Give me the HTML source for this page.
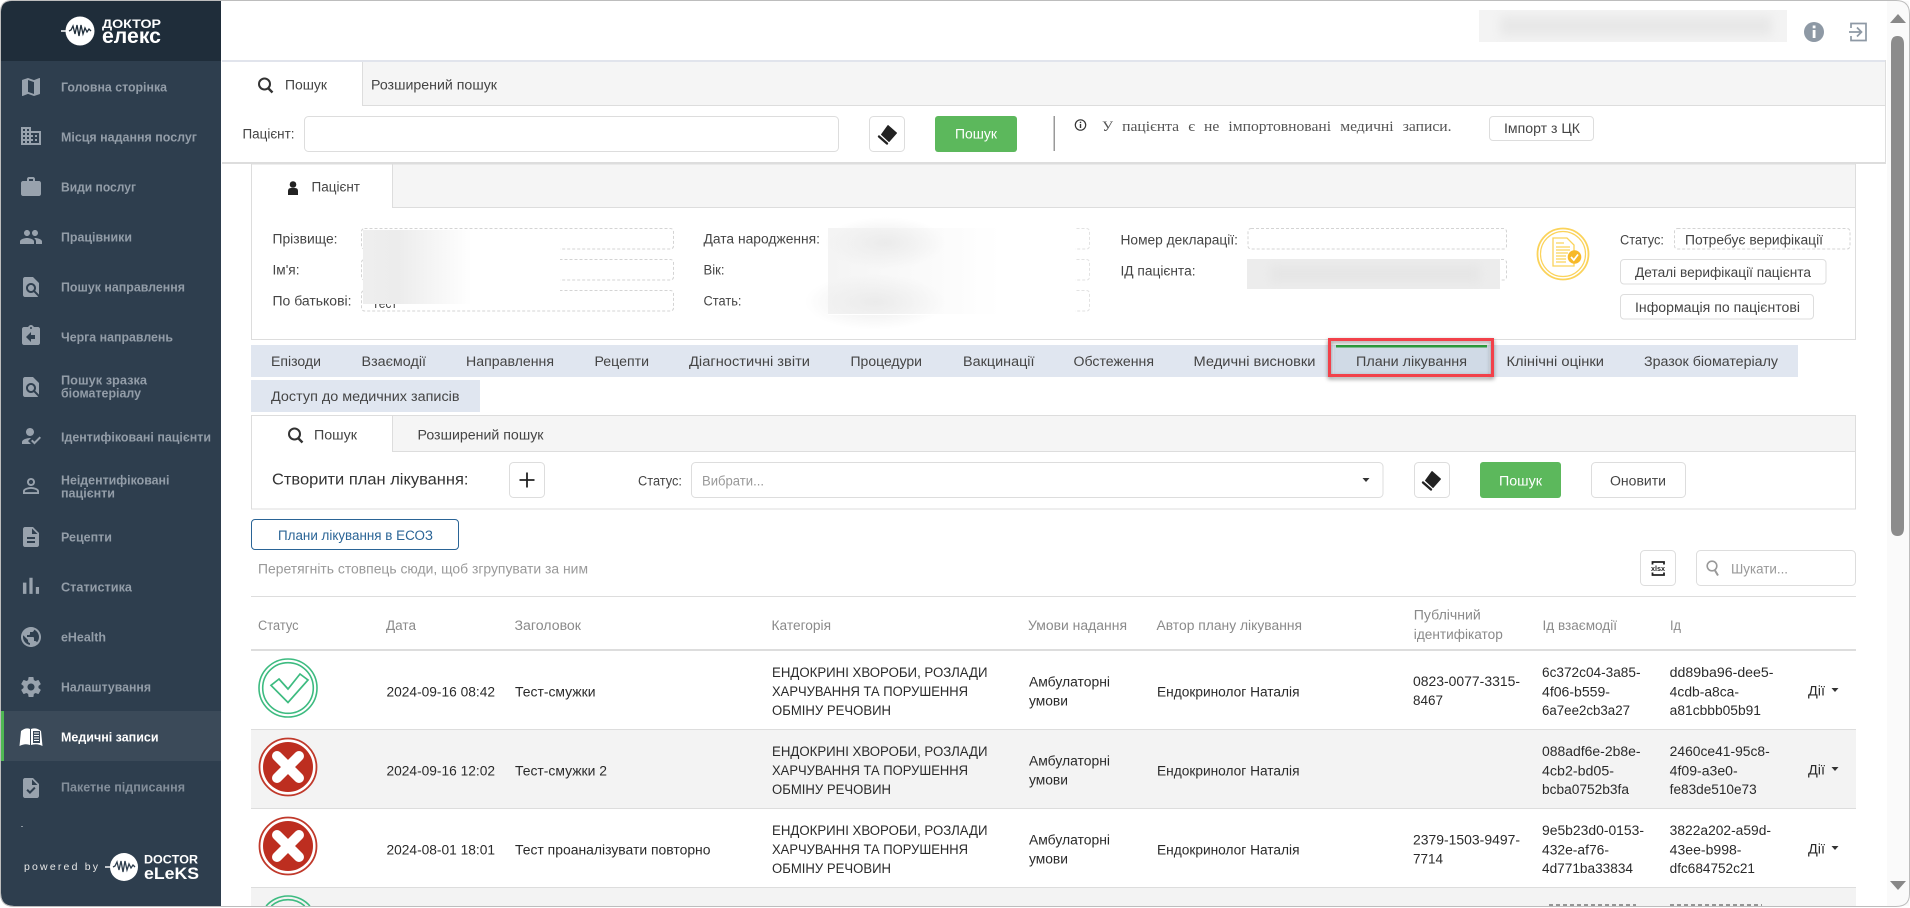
<!DOCTYPE html>
<html lang="uk"><head><meta charset="utf-8"><title>Плани лікування</title>
<style>
html,body{margin:0;padding:0;background:#fff;overflow:hidden;width:1910px;height:908px}
svg{display:block}
text{font-family:"Liberation Sans",sans-serif;font-size:13.5px;fill:#444}
.s text{font-weight:700;font-size:12.5px;fill:#939da8}
.ic path{fill:#98a2ad}
.h text{fill:#8a8a8a}
.d text{fill:#2a2a2a}
.box{fill:#fff;stroke:#ddd;stroke-width:1}
.dash{fill:#fff;stroke:#d4d4d4;stroke-width:1;stroke-dasharray:3 2}
</style></head><body>
<svg xmlns="http://www.w3.org/2000/svg" width="1910" height="908" viewBox="0 0 1910 908">
<defs>
<linearGradient id="g1" x1="0" x2="1" y1="0" y2="0"><stop offset="0" stop-color="#eee"/><stop offset=".18" stop-color="#ececec"/><stop offset=".55" stop-color="#fff"/></linearGradient>
<linearGradient id="g2" x1="0" x2="1" y1="0" y2="0"><stop offset="0" stop-color="#f4f4f4"/><stop offset=".25" stop-color="#f8f8f8"/><stop offset=".7" stop-color="#fff"/></linearGradient>
<radialGradient id="g3"><stop offset="0" stop-color="#ebebeb"/><stop offset="1" stop-color="#ebebeb" stop-opacity="0"/></radialGradient>
<filter id="b" x="-10%" y="-40%" width="120%" height="180%"><feGaussianBlur stdDeviation="5"/></filter>
<clipPath id="c1"><rect x="1479" y="10" width="308" height="32"/></clipPath>
<clipPath id="c2"><rect x="1247" y="259" width="253" height="30"/></clipPath>
<g id="eraser"><path d="M0-8.500 8.500-1 1 7.500-6.500.5Z" fill="#222" stroke="#222" stroke-linejoin="round"/><path d="M-9 2.500-1 9.500" stroke="#222" stroke-width="2.400" stroke-linecap="round"/></g>
<g id="okI"><circle r="29" fill="none" stroke="#3dbb80" stroke-width="1.600"/><circle r="25.300" fill="none" stroke="#3dbb80" stroke-width="1.600"/><path d="M-9-9 0 1 12-14 20-8 0 14.500-17-2.700z" fill="none" stroke="#3dbb80" stroke-width="1.700"/></g>
<g id="noI"><circle r="28.500" fill="#fff" stroke="#c0392b" stroke-width="1.800"/><circle r="25" fill="#bd2e20"/><path d="M-11-11 11 11M11-11-11 11" stroke="#fff" stroke-width="10" stroke-linecap="round"/></g>
</defs>

<rect width="1910" height="908" fill="#fff"/>

<!-- sidebar -->
<path d="M1 12Q1 1 12 1H221V906H14Q1 906 1 893Z" fill="#2e3e4e"/>
<path d="M1 12Q1 1 12 1H221V61H1Z" fill="#1f2d3a"/>
<rect x="1" y="711" width="220" height="50" fill="#3b4a59"/>
<rect x="1" y="711" width="3" height="50" fill="#4fb853"/>

<!-- logo -->
<circle cx="80" cy="31" r="14.500" fill="#fff"/>
<path d="M61 31H69" stroke="#fff" stroke-width="1.500" fill="none"/>
<path d="M69 31l2-1 2-4 2 8 2-9 2 11 2-11 2 9 2-6 2 4 2-3 2 2" stroke="#1f2d3a" stroke-width="1.300" fill="none"/>
<text x="102" y="28" textLength="59" lengthAdjust="spacingAndGlyphs" style="font-size:11.500px;font-weight:700;fill:#fff">ДОКТОР</text>
<text x="102" y="43" textLength="59" lengthAdjust="spacingAndGlyphs" style="font-size:21px;font-weight:700;fill:#fff">елекс</text>

<!-- sidebar icons -->
<g class="ic">
<path transform="translate(19 75)" d="M20.500 3l-.16.03L15 5.100 9 3 3.360 4.900c-.21.07-.36.25-.36.48V20.500c0 .28.22.5.5.5l.16-.03L9 18.900l6 2.100 5.640-1.900c.21-.07.36-.25.36-.48V3.500c0-.28-.22-.5-.5-.5zM15 19l-6-2.110V5l6 2.110V19z"/>
<path transform="translate(19 124)" d="M12 7V3H2v18h20V7H12zM6 19H4v-2h2v2zm0-4H4v-2h2v2zm0-4H4V9h2v2zm0-4H4V5h2v2zm4 12H8v-2h2v2zm0-4H8v-2h2v2zm0-4H8V9h2v2zm0-4H8V5h2v2zm10 12h-8v-2h2v-2h-2v-2h2v-2h-2V9h8v10zm-2-8h-2v2h2v-2zm0 4h-2v2h2v-2z"/>
<path transform="translate(19 175)" d="M20 6h-4V4c0-1.110-.89-2-2-2h-4c-1.110 0-2 .89-2 2v2H4c-1.110 0-1.990.89-1.990 2L2 19c0 1.110.89 2 2 2h16c1.110 0 2-.89 2-2V8c0-1.110-.89-2-2-2zm-6 0h-4V4h4v2z"/>
<path transform="translate(19 225)" d="M16 11c1.660 0 2.990-1.340 2.990-3S17.660 5 16 5c-1.660 0-3 1.340-3 3s1.340 3 3 3zm-8 0c1.660 0 2.990-1.340 2.990-3S9.660 5 8 5C6.340 5 5 6.340 5 8s1.340 3 3 3zm0 2c-2.330 0-7 1.170-7 3.500V19h14v-2.500c0-2.330-4.670-3.500-7-3.500zm8 0c-.29 0-.62.02-.97.05 1.160.84 1.970 1.970 1.970 3.450V19h6v-2.500c0-2.330-4.670-3.500-7-3.500z"/>
<path transform="translate(19 275)" d="M20 19.590V8l-6-6H6c-1.100 0-1.990.9-1.990 2L4 20c0 1.100.89 2 1.990 2H18c.45 0 .85-.15 1.190-.4l-4.430-4.430c-.8.52-1.740.83-2.760.83-2.760 0-5-2.240-5-5s2.240-5 5-5 5 2.240 5 5c0 1.020-.31 1.960-.83 2.750L20 19.590zM9 13c0 1.660 1.340 3 3 3s3-1.340 3-3-1.340-3-3-3-3 1.340-3 3z"/>
<path transform="translate(19 324)" d="M19 3h-4.180C14.400 1.840 13.300 1 12 1c-1.300 0-2.400.84-2.820 2H5c-1.100 0-2 .9-2 2v14c0 1.100.9 2 2 2h14c1.100 0 2-.9 2-2V5c0-1.100-.9-2-2-2zm-7 0c.55 0 1 .45 1 1s-.45 1-1 1-1-.45-1-1 .45-1 1-1zm4 12h-4v3l-5-5 5-5v3h4v4z"/>
<path transform="translate(19 375)" d="M20 19.590V8l-6-6H6c-1.100 0-1.990.9-1.990 2L4 20c0 1.100.89 2 1.990 2H18c.45 0 .85-.15 1.190-.4l-4.430-4.430c-.8.52-1.740.83-2.760.83-2.760 0-5-2.240-5-5s2.240-5 5-5 5 2.240 5 5c0 1.020-.31 1.960-.83 2.750L20 19.590zM9 13c0 1.660 1.340 3 3 3s3-1.340 3-3-1.340-3-3-3-3 1.340-3 3z"/>
<path transform="translate(19 424)" d="M9 17l3-2.940c-.39-.04-.68-.06-1-.06-2.670 0-8 1.340-8 4v2h9l-3-3zm2-5c2.210 0 4-1.790 4-4s-1.790-4-4-4-4 1.790-4 4 1.790 4 4 4zM15.470 20.500L12 17l1.400-1.410 2.070 2.080 5.130-5.170 1.400 1.410z"/>
<path transform="translate(19 474)" d="M12 5.900c1.160 0 2.100.94 2.100 2.100s-.94 2.100-2.100 2.100S9.900 9.160 9.900 8s.94-2.100 2.100-2.100m0 9c2.970 0 6.100 1.460 6.100 2.100v1.100H5.900V17c0-.64 3.130-2.100 6.100-2.100M12 4C9.790 4 8 5.790 8 8s1.790 4 4 4 4-1.790 4-4-1.790-4-4-4zm0 9c-2.670 0-8 1.340-8 4v3h16v-3c0-2.660-5.330-4-8-4z"/>
<path transform="translate(19 525)" d="M14 2H6c-1.100 0-1.990.9-1.990 2L4 20c0 1.100.89 2 1.990 2H18c1.100 0 2-.9 2-2V8l-6-6zm2 16H8v-2h8v2zm0-4H8v-2h8v2zm-3-5V3.500L18.500 9H13z"/>
<path transform="translate(17.200 572) scale(1.150)" d="M5 9.200h3V19H5zM10.600 5h2.800v14h-2.800zm5.600 8H19v6h-2.800z"/>
<path transform="translate(19 625)" d="M12 2C6.480 2 2 6.480 2 12s4.480 10 10 10 10-4.480 10-10S17.520 2 12 2zm-1 17.930c-3.950-.49-7-3.850-7-7.930 0-.62.08-1.210.21-1.790L9 15v1c0 1.100.9 2 2 2v1.930zm6.900-2.540c-.26-.81-1-1.390-1.900-1.390h-1v-3c0-.55-.45-1-1-1H8v-2h2c.55 0 1-.45 1-1V7h2c1.100 0 2-.9 2-2v-.41c2.930 1.190 5 4.060 5 7.410 0 2.080-.8 3.970-2.100 5.390z"/>
<path transform="translate(19 675)" d="M19.430 12.980c.04-.32.07-.64.07-.98s-.03-.66-.07-.98l2.110-1.650c.19-.15.24-.42.12-.64l-2-3.460c-.12-.22-.39-.3-.61-.22l-2.490 1c-.52-.4-1.080-.73-1.690-.98l-.38-2.650C14.460 2.180 14.250 2 14 2h-4c-.25 0-.46.18-.49.42l-.38 2.650c-.61.25-1.170.59-1.690.98l-2.490-1c-.23-.09-.49 0-.61.22l-2 3.460c-.13.22-.07.49.12.64l2.110 1.650c-.04.32-.07.65-.07.98s.03.66.07.98l-2.110 1.650c-.19.15-.24.42-.12.64l2 3.460c.12.22.39.3.61.22l2.490-1c.52.4 1.080.73 1.690.98l.38 2.650c.03.24.24.42.49.42h4c.25 0 .46-.18.49-.42l.38-2.650c.61-.25 1.170-.59 1.690-.98l2.490 1c.23.09.49 0 .61-.22l2-3.460c.12-.22.07-.49-.12-.64l-2.110-1.650zM12 15.500c-1.930 0-3.500-1.570-3.500-3.500s1.570-3.500 3.500-3.500 3.500 1.570 3.500 3.500-1.570 3.500-3.500 3.500z"/>
<path transform="translate(19 776)" d="M14 2H6c-1.100 0-1.990.9-1.990 2L4 20c0 1.100.89 2 1.990 2H18c1.100 0 2-.9 2-2V8l-6-6zm-3.060 16L7.400 14.460l1.410-1.410 2.120 2.120 4.240-4.240 1.410 1.410L10.940 18zM13 9V3.500L18.500 9H13z"/>
</g>
<!-- book -->
<path d="M19.500 746 21 731Q26 727 30 729V745Q25 743 19.500 746Z" fill="#fff"/>
<path d="M31 729Q36 727 41 731L42.500 746Q37 743 31 745Z" fill="#fff"/>
<rect x="33" y="731" width="7" height="12" fill="#3b4a59"/>
<path d="M34 733H39M34 735.500H39M34 738H39M34 740.500H39" stroke="#fff" stroke-width="1"/>

<!-- sidebar text -->
<g class="s">
<text x="61" y="91.500" textLength="106" lengthAdjust="spacingAndGlyphs">Головна сторінка</text>
<text x="61" y="141.500" textLength="136" lengthAdjust="spacingAndGlyphs">Місця надання послуг</text>
<text x="61" y="191.500" textLength="75" lengthAdjust="spacingAndGlyphs">Види послуг</text>
<text x="61" y="241.500" textLength="71" lengthAdjust="spacingAndGlyphs">Працівники</text>
<text x="61" y="291.500" textLength="124" lengthAdjust="spacingAndGlyphs">Пошук направлення</text>
<text x="61" y="341.500" textLength="112" lengthAdjust="spacingAndGlyphs">Черга направлень</text>
<text x="61" y="384.500" textLength="86" lengthAdjust="spacingAndGlyphs">Пошук зразка</text>
<text x="61" y="397.500" textLength="80" lengthAdjust="spacingAndGlyphs">біоматеріалу</text>
<text x="61" y="441.500" textLength="150" lengthAdjust="spacingAndGlyphs">Ідентифіковані пацієнти</text>
<text x="61" y="484.500" textLength="108.500" lengthAdjust="spacingAndGlyphs">Неідентифіковані</text>
<text x="61" y="497.500" textLength="54" lengthAdjust="spacingAndGlyphs">пацієнти</text>
<text x="61" y="541.500" textLength="51" lengthAdjust="spacingAndGlyphs">Рецепти</text>
<text x="61" y="591.500" textLength="71" lengthAdjust="spacingAndGlyphs">Статистика</text>
<text x="61" y="641.500" textLength="45" lengthAdjust="spacingAndGlyphs">eHealth</text>
<text x="61" y="691.500" textLength="90" lengthAdjust="spacingAndGlyphs">Налаштування</text>
<text x="61" y="741.500" textLength="97.500" lengthAdjust="spacingAndGlyphs" style="fill:#fff">Медичні записи</text>
<text x="61" y="791.500" textLength="124" lengthAdjust="spacingAndGlyphs" style="fill:#838e9a">Пакетне підписання</text>
</g>
<rect x="21" y="826" width="2" height="1" fill="#8b96a1"/>

<!-- powered by -->
<text x="24" y="870" textLength="74" style="font-size:10.500px;fill:#e8e8e8">powered by</text>
<circle cx="124" cy="867" r="14" fill="#fff"/>
<path d="M105 867H113" stroke="#fff" stroke-width="1.400" fill="none"/>
<path d="M113 867l2-1 2-4 2 8 2-9 2 11 2-11 2 9 2-6 2 4 2-3 2 2" stroke="#2e3e4e" stroke-width="1.300" fill="none"/>
<text x="144" y="863.500" textLength="54" lengthAdjust="spacingAndGlyphs" style="font-size:11.500px;font-weight:700;fill:#fff">DOCTOR</text>
<text x="144" y="879" textLength="55" lengthAdjust="spacingAndGlyphs" style="font-size:17px;font-weight:700;fill:#fff">eLeKS</text>

<!-- top bar -->
<g clip-path="url(#c1)"><rect x="1479" y="10" width="308" height="32" fill="#f3f3f3"/><rect x="1500" y="16" width="272" height="20" fill="#e8e8e8" filter="url(#b)"/></g>
<circle cx="1814" cy="32" r="10" fill="#8e99a5"/>
<rect x="1812.700" y="30" width="2.800" height="8" fill="#fff"/><rect x="1812.700" y="25.500" width="2.800" height="2.800" fill="#fff"/>
<path d="M1851 28V23.500H1866V40.500H1851V36M1849 32H1861M1857 27.500L1861.500 32 1857 36.500" fill="none" stroke="#8e99a5" stroke-width="1.700"/>

<!-- top panel -->
<rect x="222" y="60" width="1663" height="2" fill="#e1e4ec"/>
<rect x="363" y="62" width="1522" height="43" fill="#f5f5f5"/>
<path d="M362.500 62V105.500H1885" fill="none" stroke="#ddd"/>
<path d="M1885.500 60V163" stroke="#ddd"/>
<rect x="222" y="162" width="1664" height="2" fill="#ddd"/>
<g fill="none" stroke="#333" stroke-width="2"><circle cx="264.500" cy="84" r="5.500"/><path d="M268.500 88.500 272.500 92.500" stroke-width="2.400"/></g>
<text x="285" y="89.500" textLength="42" lengthAdjust="spacingAndGlyphs">Пошук</text>
<text x="371" y="89.500" textLength="126" lengthAdjust="spacingAndGlyphs">Розширений пошук</text>
<text x="242.500" y="138.500" textLength="52" lengthAdjust="spacingAndGlyphs">Пацієнт:</text>
<rect class="box" x="304.500" y="116.500" width="534" height="35" rx="4"/>
<rect class="box" x="869.500" y="116.500" width="35" height="35" rx="4"/>
<use href="#eraser" transform="translate(888 134)"/>
<rect x="935" y="116" width="82" height="36" rx="3" fill="#5cb85c"/>
<text x="955" y="138.500" textLength="42" lengthAdjust="spacingAndGlyphs" style="fill:#fff">Пошук</text>
<rect x="1053.500" y="116" width="1.500" height="35" fill="#999"/>
<circle cx="1080.500" cy="125" r="5.200" fill="none" stroke="#333" stroke-width="1.200"/>
<rect x="1079.800" y="124" width="1.400" height="4" fill="#333"/><rect x="1079.800" y="121.700" width="1.400" height="1.400" fill="#333"/>
<text x="1102" y="131" textLength="349.500" lengthAdjust="spacingAndGlyphs" style="font-family:'Liberation Serif',serif;font-size:15px;word-spacing:5px;fill:#555">У пацієнта є не імпортовновані медичні записи.</text>
<rect class="box" x="1489.500" y="116.500" width="104" height="24" rx="3.500"/>
<text x="1504" y="133" textLength="76" lengthAdjust="spacingAndGlyphs">Імпорт з ЦК</text>

<!-- patient panel -->
<rect x="251.500" y="164" width="1604" height="175.500" fill="#fff" stroke="#ddd"/>
<rect x="393" y="164.500" width="1462" height="42.500" fill="#f5f5f5"/>
<path d="M392.500 164V207.500H1855" fill="none" stroke="#ddd"/>
<circle cx="293" cy="184.500" r="3.300" fill="#222"/><path d="M288 195V191Q288 188 291 188H295Q298 188 298 191V195Z" fill="#222"/>
<text x="311.500" y="191.500" textLength="48.500" lengthAdjust="spacingAndGlyphs">Пацієнт</text>
<text x="272.500" y="243.500" textLength="65" lengthAdjust="spacingAndGlyphs">Прізвище:</text>
<text x="272.500" y="274.500" textLength="27" lengthAdjust="spacingAndGlyphs">Ім'я:</text>
<text x="272.500" y="305.500" textLength="79" lengthAdjust="spacingAndGlyphs">По батькові:</text>
<rect class="dash" x="361.500" y="228.500" width="312" height="20.500" rx="3"/>
<rect class="dash" x="361.500" y="259.500" width="312" height="20.500" rx="3"/>
<rect class="dash" x="361.500" y="290.500" width="312" height="20.500" rx="3"/>
<text x="372" y="308" textLength="25" lengthAdjust="spacingAndGlyphs">Тест</text>
<rect x="363" y="230" width="197" height="74" fill="url(#g1)"/>
<text x="703.500" y="243.500" textLength="116.500" lengthAdjust="spacingAndGlyphs">Дата народження:</text>
<text x="703.500" y="274.500" textLength="21" lengthAdjust="spacingAndGlyphs">Вік:</text>
<text x="703.500" y="305.500" textLength="38" lengthAdjust="spacingAndGlyphs">Стать:</text>
<rect class="dash" x="828.500" y="228.500" width="261" height="20.500" rx="3" style="stroke:#e2e2e2"/>
<rect class="dash" x="828.500" y="259.500" width="261" height="20.500" rx="3" style="stroke:#e2e2e2"/>
<rect class="dash" x="828.500" y="290.500" width="261" height="20.500" rx="3" style="stroke:#e2e2e2"/>
<rect x="828" y="228" width="247" height="86" fill="#fff"/>
<rect x="828" y="228" width="247" height="86" fill="url(#g2)"/>
<ellipse cx="885" cy="243" rx="60" ry="26" fill="url(#g3)"/>
<ellipse cx="875" cy="302" rx="70" ry="28" fill="url(#g3)"/>
<rect x="828" y="314" width="247" height="1" fill="#fff"/>
<text x="1120.500" y="244.500" textLength="117.500" lengthAdjust="spacingAndGlyphs">Номер декларації:</text>
<text x="1120.500" y="275.500" textLength="75" lengthAdjust="spacingAndGlyphs">ІД пацієнта:</text>
<rect class="dash" x="1248" y="228.500" width="258.500" height="20.500" rx="3"/>
<rect class="dash" x="1248" y="259.500" width="258.500" height="20.500" rx="3"/>
<g clip-path="url(#c2)"><rect x="1247" y="259" width="253" height="30" fill="#ececec"/><rect x="1270" y="265" width="210" height="18" fill="#e6e6e6" filter="url(#b)"/></g>
<g fill="none" stroke="#fbd35a"><circle cx="1563" cy="254" r="25.500" stroke-width="1.800"/><circle cx="1563" cy="254" r="22.500" stroke-width="1.200"/>
<path d="M1553 238H1567L1574 245V266H1553Z" stroke-width="1.300" fill="#fff"/>
<path d="M1556 243H1564M1556 247H1570M1556 250H1570M1556 253H1568M1556 256H1566M1556 259H1566M1556 262H1566" stroke-width="1.200"/></g>
<circle cx="1574.500" cy="257" r="6.800" fill="#f7b928"/>
<path d="M1571 257 1573.800 260 1578 254.500" fill="none" stroke="#fff" stroke-width="1.700"/>
<text x="1620" y="244.500" textLength="44" lengthAdjust="spacingAndGlyphs">Статус:</text>
<rect class="dash" x="1674.500" y="228.500" width="175.500" height="20.500" rx="3"/>
<text x="1685" y="244.500" textLength="138" lengthAdjust="spacingAndGlyphs">Потребує верифікації</text>
<rect class="box" x="1620.500" y="259.500" width="205.500" height="24.500" rx="3.500"/>
<text x="1635" y="277" textLength="176" lengthAdjust="spacingAndGlyphs">Деталі верифікації пацієнта</text>
<rect class="box" x="1620.500" y="294.500" width="193" height="24.500" rx="3.500"/>
<text x="1635" y="312" textLength="165" lengthAdjust="spacingAndGlyphs">Інформація по пацієнтові</text>

<!-- nav tabs -->
<rect x="251" y="345" width="1547" height="32" fill="#e0e6f0"/>
<rect x="251" y="380" width="229" height="32" fill="#e0e6f0"/>
<rect x="1334" y="345" width="155" height="32" fill="#d0dae6"/>
<rect x="1336" y="345" width="151" height="2.500" fill="#2e9e3e"/>
<text x="271" y="366" textLength="50" lengthAdjust="spacingAndGlyphs">Епізоди</text>
<text x="361.500" y="366" textLength="64.500" lengthAdjust="spacingAndGlyphs">Взаємодії</text>
<text x="466" y="366" textLength="88" lengthAdjust="spacingAndGlyphs">Направлення</text>
<text x="594.500" y="366" textLength="54.500" lengthAdjust="spacingAndGlyphs">Рецепти</text>
<text x="689" y="366" textLength="121" lengthAdjust="spacingAndGlyphs">Діагностичні звіти</text>
<text x="850.500" y="366" textLength="71.500" lengthAdjust="spacingAndGlyphs">Процедури</text>
<text x="963" y="366" textLength="71.500" lengthAdjust="spacingAndGlyphs">Вакцинації</text>
<text x="1073.500" y="366" textLength="80.500" lengthAdjust="spacingAndGlyphs">Обстеження</text>
<text x="1193.500" y="366" textLength="122" lengthAdjust="spacingAndGlyphs">Медичні висновки</text>
<text x="1356" y="366" textLength="111" lengthAdjust="spacingAndGlyphs">Плани лікування</text>
<text x="1506.500" y="366" textLength="97.500" lengthAdjust="spacingAndGlyphs">Клінічні оцінки</text>
<text x="1644" y="366" textLength="134" lengthAdjust="spacingAndGlyphs">Зразок біоматеріалу</text>
<text x="271" y="401" textLength="188.500" lengthAdjust="spacingAndGlyphs">Доступ до медичних записів</text>
<rect x="1329.500" y="339.500" width="163" height="36" fill="none" stroke="#f2414a" stroke-width="3" style="filter:drop-shadow(0 2px 2px rgba(0,0,0,.45))"/>

<!-- search panel 2 -->
<rect x="251.500" y="415.500" width="1604" height="93.500" fill="#fff" stroke="#ddd"/>
<rect x="393" y="416" width="1462" height="35" fill="#f5f5f5"/>
<path d="M392.500 416V451.500H1855" fill="none" stroke="#ddd"/>
<g fill="none" stroke="#333" stroke-width="2"><circle cx="294.500" cy="434" r="5.500"/><path d="M298.500 438.500 302.500 442.500" stroke-width="2.400"/></g>
<text x="314" y="439.500" textLength="43" lengthAdjust="spacingAndGlyphs">Пошук</text>
<text x="417.500" y="439.500" textLength="126" lengthAdjust="spacingAndGlyphs">Розширений пошук</text>
<text x="272" y="484.500" textLength="196.500" lengthAdjust="spacingAndGlyphs" style="font-size:16px;fill:#333">Створити план лікування:</text>
<rect class="box" x="509.500" y="462.500" width="35" height="35" rx="4"/>
<path d="M527 472.500V487.500M519.500 480H534.500" stroke="#222" stroke-width="1.800"/>
<text x="638" y="485.500" textLength="44" lengthAdjust="spacingAndGlyphs">Статус:</text>
<rect class="box" x="691.500" y="462.500" width="691.500" height="35" rx="4"/>
<text x="702" y="485.500" textLength="62" lengthAdjust="spacingAndGlyphs" style="fill:#999">Вибрати...</text>
<path d="M1362.500 478H1369.500L1366 482Z" fill="#333"/>
<rect class="box" x="1414.500" y="462.500" width="35" height="35" rx="4"/>
<use href="#eraser" transform="translate(1432 480)"/>
<rect x="1480" y="462" width="81" height="36" rx="3" fill="#5cb85c"/>
<text x="1499" y="485.500" textLength="43" lengthAdjust="spacingAndGlyphs" style="fill:#fff">Пошук</text>
<rect class="box" x="1591.500" y="462.500" width="94" height="35" rx="4"/>
<text x="1610" y="485.500" textLength="56" lengthAdjust="spacingAndGlyphs">Оновити</text>

<!-- toolbar -->
<rect x="251.500" y="519.500" width="207" height="30" rx="3.500" fill="#fff" stroke="#2a6496"/>
<text x="278" y="540" textLength="155" lengthAdjust="spacingAndGlyphs" style="fill:#2a6496">Плани лікування в ЕСОЗ</text>
<text x="258" y="573.500" textLength="330" lengthAdjust="spacingAndGlyphs" style="fill:#999">Перетягніть стовпець сюди, щоб згрупувати за ним</text>
<rect class="box" x="1640.500" y="550.500" width="35" height="35" rx="4"/>
<path d="M1652.500 564.500V562H1664V564.500M1652.500 572.500V575H1664V572.500" fill="none" stroke="#222" stroke-width="1.800"/>
<text x="1651" y="571" textLength="14" lengthAdjust="spacingAndGlyphs" style="font-size:7px;font-weight:700;fill:#222">xlsx</text>
<rect class="box" x="1696.500" y="550.500" width="159" height="35" rx="4"/>
<g fill="none" stroke="#999" stroke-width="1.600"><circle cx="1712" cy="566" r="4.800"/><path d="M1715 570.500 1718 575.500" stroke-width="2"/></g>
<text x="1731" y="573.500" textLength="57" lengthAdjust="spacingAndGlyphs" style="fill:#999">Шукати...</text>

<!-- table -->
<rect x="251" y="596" width="1605" height="1" fill="#ddd"/>
<rect x="251" y="649" width="1605" height="2" fill="#ddd"/>
<g class="h">
<text x="258" y="630" textLength="40.500" lengthAdjust="spacingAndGlyphs">Статус</text>
<text x="386" y="630" textLength="30" lengthAdjust="spacingAndGlyphs">Дата</text>
<text x="514.500" y="630" textLength="66.500" lengthAdjust="spacingAndGlyphs">Заголовок</text>
<text x="771.500" y="630" textLength="59.500" lengthAdjust="spacingAndGlyphs">Категорія</text>
<text x="1028" y="630" textLength="99" lengthAdjust="spacingAndGlyphs">Умови надання</text>
<text x="1156.500" y="630" textLength="145.500" lengthAdjust="spacingAndGlyphs">Автор плану лікування</text>
<text x="1413.800" y="619.500" textLength="67" lengthAdjust="spacingAndGlyphs">Публічний</text>
<text x="1413.800" y="639" textLength="89" lengthAdjust="spacingAndGlyphs">ідентифікатор</text>
<text x="1542.500" y="630" textLength="74.500" lengthAdjust="spacingAndGlyphs">Ід взаємодії</text>
<text x="1670" y="630" textLength="11" lengthAdjust="spacingAndGlyphs">Ід</text>
</g>

<rect x="251" y="730" width="1605" height="78" fill="#f3f3f3"/>
<rect x="251" y="888" width="1605" height="18" fill="#f3f3f3"/>
<rect x="251" y="729" width="1605" height="1" fill="#ddd"/>
<rect x="251" y="808" width="1605" height="1" fill="#ddd"/>
<rect x="251" y="887" width="1605" height="1" fill="#ddd"/>

<use href="#okI" x="288" y="688"/>
<use href="#noI" x="288" y="767"/>
<use href="#noI" x="288" y="846"/>
<path d="M266.100 906A29 29 0 0 1 309.900 906M271.300 906A25.300 25.300 0 0 1 304.700 906" fill="none" stroke="#3dbb80" stroke-width="1.600"/>

<g class="d">
<!-- row 1 -->
<text x="386.500" y="696.500" textLength="108.500" lengthAdjust="spacingAndGlyphs">2024-09-16 08:42</text>
<text x="515" y="696.500" textLength="80.500" lengthAdjust="spacingAndGlyphs">Тест-смужки</text>
<text x="772" y="677" textLength="215.500" lengthAdjust="spacingAndGlyphs">ЕНДОКРИНІ ХВОРОБИ, РОЗЛАДИ</text>
<text x="772" y="696" textLength="196" lengthAdjust="spacingAndGlyphs">ХАРЧУВАННЯ ТА ПОРУШЕННЯ</text>
<text x="772" y="715" textLength="119" lengthAdjust="spacingAndGlyphs">ОБМІНУ РЕЧОВИН</text>
<text x="1029" y="686.500" textLength="81" lengthAdjust="spacingAndGlyphs">Амбулаторні</text>
<text x="1029" y="705.500" textLength="39" lengthAdjust="spacingAndGlyphs">умови</text>
<text x="1157" y="696.500" textLength="142.500" lengthAdjust="spacingAndGlyphs">Ендокринолог Наталія</text>
<text x="1413" y="686" textLength="107" lengthAdjust="spacingAndGlyphs">0823-0077-3315-</text>
<text x="1413" y="705" textLength="30" lengthAdjust="spacingAndGlyphs">8467</text>
<text x="1542" y="677" textLength="98.500" lengthAdjust="spacingAndGlyphs">6c372c04-3a85-</text>
<text x="1542" y="696.500" textLength="68" lengthAdjust="spacingAndGlyphs">4f06-b559-</text>
<text x="1542" y="715" textLength="88" lengthAdjust="spacingAndGlyphs">6a7ee2cb3a27</text>
<text x="1669.700" y="677" textLength="103.800" lengthAdjust="spacingAndGlyphs">dd89ba96-dee5-</text>
<text x="1669.700" y="696.500" textLength="69.300" lengthAdjust="spacingAndGlyphs">4cdb-a8ca-</text>
<text x="1669.700" y="715" textLength="91.300" lengthAdjust="spacingAndGlyphs">a81cbbb05b91</text>
<text x="1808" y="695.500" textLength="17" lengthAdjust="spacingAndGlyphs">Дії</text>
<path d="M1831.500 688H1838.500L1835 692Z" fill="#333"/>
<!-- row 2 -->
<text x="386.500" y="775.500" textLength="108.500" lengthAdjust="spacingAndGlyphs">2024-09-16 12:02</text>
<text x="515" y="775.500" textLength="92" lengthAdjust="spacingAndGlyphs">Тест-смужки 2</text>
<text x="772" y="756" textLength="215.500" lengthAdjust="spacingAndGlyphs">ЕНДОКРИНІ ХВОРОБИ, РОЗЛАДИ</text>
<text x="772" y="775" textLength="196" lengthAdjust="spacingAndGlyphs">ХАРЧУВАННЯ ТА ПОРУШЕННЯ</text>
<text x="772" y="794" textLength="119" lengthAdjust="spacingAndGlyphs">ОБМІНУ РЕЧОВИН</text>
<text x="1029" y="765.500" textLength="81" lengthAdjust="spacingAndGlyphs">Амбулаторні</text>
<text x="1029" y="784.500" textLength="39" lengthAdjust="spacingAndGlyphs">умови</text>
<text x="1157" y="775.500" textLength="142.500" lengthAdjust="spacingAndGlyphs">Ендокринолог Наталія</text>
<text x="1542" y="756" textLength="98.500" lengthAdjust="spacingAndGlyphs">088adf6e-2b8e-</text>
<text x="1542" y="775.500" textLength="72" lengthAdjust="spacingAndGlyphs">4cb2-bd05-</text>
<text x="1542" y="794" textLength="87" lengthAdjust="spacingAndGlyphs">bcba0752b3fa</text>
<text x="1669.700" y="756" textLength="100" lengthAdjust="spacingAndGlyphs">2460ce41-95c8-</text>
<text x="1669.700" y="775.500" textLength="68" lengthAdjust="spacingAndGlyphs">4f09-a3e0-</text>
<text x="1669.700" y="794" textLength="87" lengthAdjust="spacingAndGlyphs">fe83de510e73</text>
<text x="1808" y="774.500" textLength="17" lengthAdjust="spacingAndGlyphs">Дії</text>
<path d="M1831.500 767H1838.500L1835 771Z" fill="#333"/>
<!-- row 3 -->
<text x="386.500" y="854.500" textLength="108.500" lengthAdjust="spacingAndGlyphs">2024-08-01 18:01</text>
<text x="515" y="854.500" textLength="195.500" lengthAdjust="spacingAndGlyphs">Тест проаналізувати повторно</text>
<text x="772" y="835" textLength="215.500" lengthAdjust="spacingAndGlyphs">ЕНДОКРИНІ ХВОРОБИ, РОЗЛАДИ</text>
<text x="772" y="854" textLength="196" lengthAdjust="spacingAndGlyphs">ХАРЧУВАННЯ ТА ПОРУШЕННЯ</text>
<text x="772" y="873" textLength="119" lengthAdjust="spacingAndGlyphs">ОБМІНУ РЕЧОВИН</text>
<text x="1029" y="844.500" textLength="81" lengthAdjust="spacingAndGlyphs">Амбулаторні</text>
<text x="1029" y="863.500" textLength="39" lengthAdjust="spacingAndGlyphs">умови</text>
<text x="1157" y="854.500" textLength="142.500" lengthAdjust="spacingAndGlyphs">Ендокринолог Наталія</text>
<text x="1413" y="844.500" textLength="107" lengthAdjust="spacingAndGlyphs">2379-1503-9497-</text>
<text x="1413" y="863.500" textLength="30" lengthAdjust="spacingAndGlyphs">7714</text>
<text x="1542" y="835" textLength="102" lengthAdjust="spacingAndGlyphs">9e5b23d0-0153-</text>
<text x="1542" y="854.500" textLength="67" lengthAdjust="spacingAndGlyphs">432e-af76-</text>
<text x="1542" y="873" textLength="91" lengthAdjust="spacingAndGlyphs">4d771ba33834</text>
<text x="1669.700" y="835" textLength="101.300" lengthAdjust="spacingAndGlyphs">3822a202-a59d-</text>
<text x="1669.700" y="854.500" textLength="71.800" lengthAdjust="spacingAndGlyphs">43ee-b998-</text>
<text x="1669.700" y="873" textLength="85.300" lengthAdjust="spacingAndGlyphs">dfc684752c21</text>
<text x="1808" y="853.500" textLength="17" lengthAdjust="spacingAndGlyphs">Дії</text>
<path d="M1831.500 846H1838.500L1835 850Z" fill="#333"/>
</g>
<!-- row 4: only glyph tops are visible above the frame edge -->
<path d="M1549 905H1636M1670 905H1762" stroke="#777" stroke-width="1.400" stroke-dasharray="4 3" fill="none"/>

<!-- scrollbar -->
<rect x="1887" y="1" width="22" height="906" fill="#fafafa"/>
<path d="M1891 44Q1891 36 1897.500 36T1904 44V528Q1904 536 1897.500 536T1891 528Z" fill="#8c8c8c"/>
<path d="M1890 23 1898 14 1906 23Z" fill="#888"/>
<path d="M1890 881 1898 890 1906 881Z" fill="#888"/>

<!-- window frame -->
<rect x="0" y="906" width="1910" height="2" fill="#fff"/>
<path d="M.5 12Q.5 .5 12 .5H1896Q1909.500 .5 1909.500 14V894Q1909.500 906.500 1896 906.500H14Q.5 906.500 .5 893Z" fill="none" stroke="#bdbdbd"/>
</svg>
</body></html>
